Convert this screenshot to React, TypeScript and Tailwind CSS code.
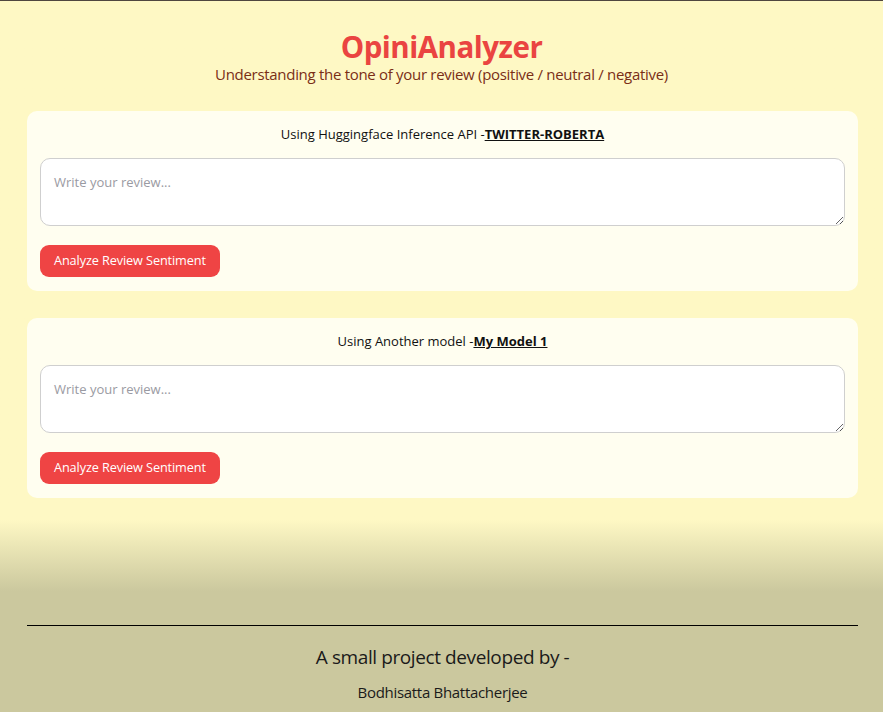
import React from "react";

function Card({ label, model }: { label: string; model: string }) {
  return (
    <div className="rounded-[10px] bg-[#fffef0] pl-[13px] pr-[13px] pt-[14px] pb-[14px]">
      <p className="text-center text-[13px] leading-[18px] text-[#111]">
        {label} -<span className="font-bold underline">{model}</span>
      </p>
      <textarea
        placeholder="Write your review..."
        className="mt-[15px] box-border block h-[68px] w-full rounded-[10px] border border-[#cfcfcf] bg-white px-[13px] py-[14px] text-[13px] leading-[18px] outline-none placeholder:text-[#9a9aa2]"
      />
      <button className="mt-[19px] h-[32px] rounded-[9px] bg-[#ef4444] px-[14px] text-[12.7px] tracking-[-0.1px] text-white">
        Analyze Review Sentiment
      </button>
    </div>
  );
}

export default function App() {
  return (
    <div
      className="flex h-[712px] flex-col overflow-hidden border-t border-[#4f463f] bg-linear-to-b from-[#fef8c4] from-[73%] to-[#cbc89e] to-[83%]"
      style={{ fontFamily: '"Open Sans", "Noto Sans", sans-serif' }}
    >
      <header className="pt-[29px] text-center">
        <h1 className="text-[29.5px] font-bold leading-[34px] tracking-[-0.5px] text-[#ea4441]">OpiniAnalyzer</h1>
        <p className="text-[15px] leading-[20px] tracking-[-0.3px] text-[#7a2e16]">
          Understanding the tone of your review (positive / neutral / negative)
        </p>
      </header>
      <main className="mt-[27px] flex flex-col gap-[27px] pl-[27px] pr-[25px]">
        <Card label="Using Huggingface Inference API" model="TWITTER-ROBERTA" />
        <Card label="Using Another model" model="My Model 1" />
      </main>
      <footer className="mt-auto pl-[27px] pr-[25px] pb-[10px]">
        <div className="border-t border-black" />
        <p className="mt-[18px] text-center text-[19px] leading-[26px] tracking-[-0.4px] text-[#1a1a1a]">
          A small project developed by -
        </p>
        <p className="mt-[12px] text-center text-[15px] leading-[20px] tracking-[-0.3px] text-[#1a1a1a]">
          Bodhisatta Bhattacherjee
        </p>
      </footer>
    </div>
  );
}
